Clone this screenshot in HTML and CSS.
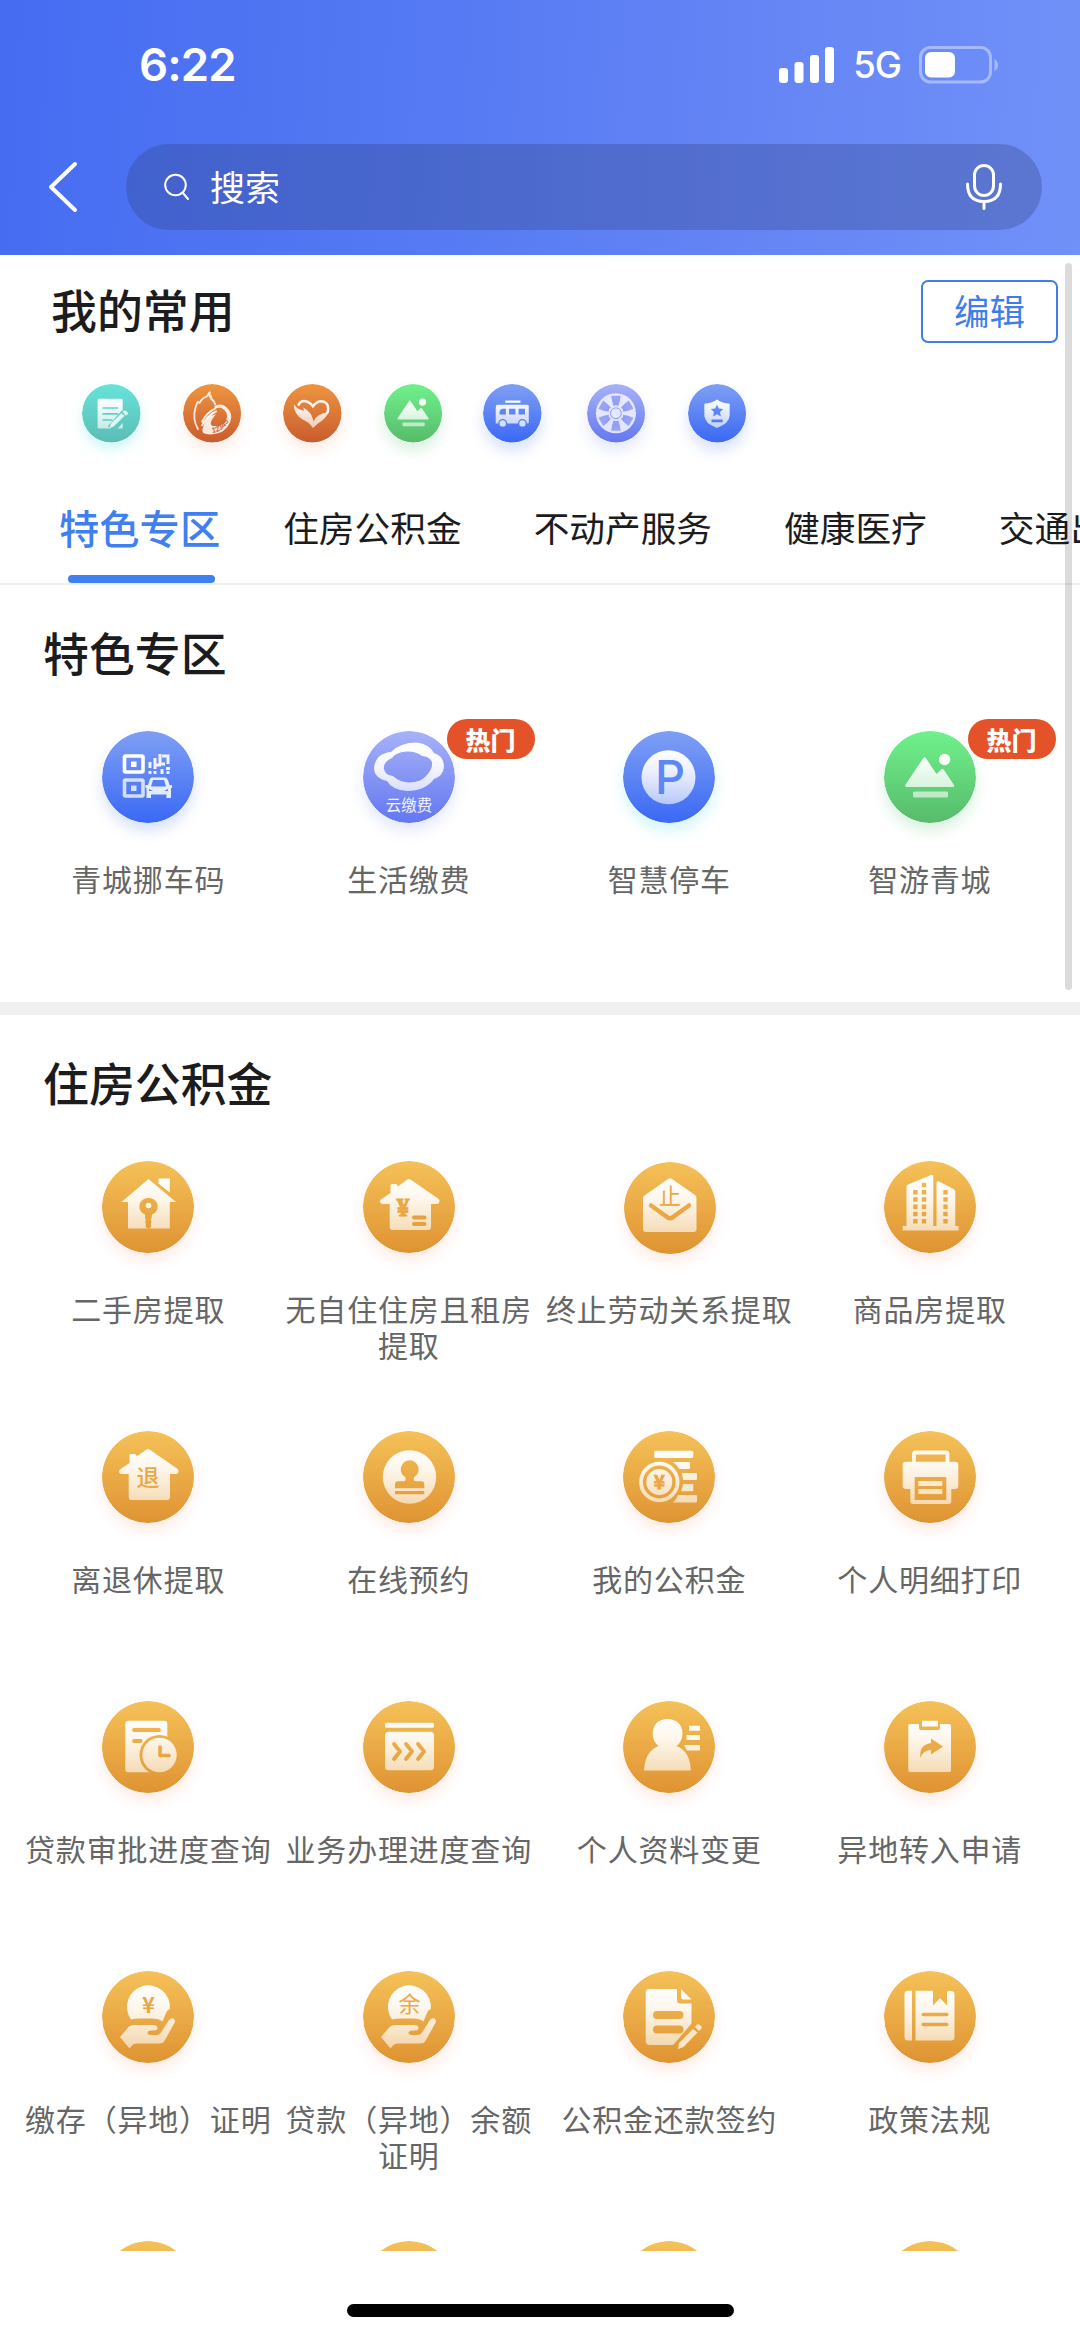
FILE: index.html
```html
<!DOCTYPE html>
<html lang="zh-CN">
<head>
<meta charset="utf-8">
<title>服务</title>
<link rel="stylesheet" href="styles.css">
</head>
<body>
<svg class="defs" width="0" height="0" aria-hidden="true">
  <defs>
    <linearGradient id="gold" gradientUnits="userSpaceOnUse" x1="0" y1="0" x2="0" y2="92"><stop offset="0" stop-color="#f5c158"/><stop offset="1" stop-color="#df9332"/></linearGradient>
    <linearGradient id="blue" gradientUnits="userSpaceOnUse" x1="0" y1="0" x2="0" y2="92"><stop offset="0" stop-color="#7f9ff5"/><stop offset="1" stop-color="#3a69f4"/></linearGradient>
    <linearGradient id="violet" gradientUnits="userSpaceOnUse" x1="0" y1="0" x2="0" y2="92"><stop offset="0" stop-color="#a7b2f8"/><stop offset="1" stop-color="#6377f1"/></linearGradient>
    <linearGradient id="green" gradientUnits="userSpaceOnUse" x1="0" y1="0" x2="0" y2="92"><stop offset="0" stop-color="#70f18c"/><stop offset="1" stop-color="#57bb6b"/></linearGradient>
    <linearGradient id="teal" gradientUnits="userSpaceOnUse" x1="0" y1="0" x2="0" y2="92"><stop offset="0" stop-color="#68e3da"/><stop offset="1" stop-color="#5bbdb4"/></linearGradient>
    <linearGradient id="rust" gradientUnits="userSpaceOnUse" x1="0" y1="0" x2="0" y2="92"><stop offset="0" stop-color="#ef9540"/><stop offset="1" stop-color="#c95c2e"/></linearGradient>
    <linearGradient id="white" gradientUnits="userSpaceOnUse" x1="0" y1="16" x2="0" y2="76"><stop offset="0" stop-color="#fff"/><stop offset=".35" stop-color="#fff" stop-opacity=".9"/><stop offset="1" stop-color="#fff" stop-opacity=".58"/></linearGradient>
    <symbol id="house" viewBox="0 0 92 92">
      <path fill="url(#white)" d="M27.5 32V24.5Q27.5 23 29 23H33Q34.5 23 34.6 25.5L44.5 18.6Q46 17.6 47.5 18.6L75 37.500Q77.500 39.500 76 42Q75.300 43 73.500 43H68V66Q68 69 65 69H29.500Q26.700 69 26.700 66V43H19.500Q17.500 43 17 41Q16.700 39 18.500 38Z"/>
    </symbol>
    <symbol id="mountain" viewBox="0 0 92 92">
      <path fill="url(#white)" d="M39 27.500Q40.600 24.500 42.200 27.500L52.500 43L57 38.500Q58.500 37 60 39L70 54Q70.800 55.800 69 56H22.500Q20.500 55.800 21.500 53.500Z"/>
      <circle cx="60.600" cy="28.500" r="5.700" fill="url(#white)"/>
      <rect x="29" y="60.500" width="35" height="6" rx="1.500" fill="#fff" opacity=".6"/>
    </symbol>
    <symbol id="hand" viewBox="0 0 92 92">
      <path fill="url(#white)" d="M29 48.500A21.500 21.500 0 1 1 67.800 38Q65 39 64 42L60.500 50.500Q57 47.500 50 47.500H38Q32 47.500 29 48.500Z"/>
      <path fill="url(#white)" d="M18 66L26.500 56Q28.500 54 32 54H51Q55.500 54 55.500 57Q55.500 59.500 51.500 59.500H49Q46 59.500 45.500 61.500Q45.300 64 49 64H54Q57.500 64 59 61.500L67 49Q69 46.500 71.500 47.500Q73.700 49 72.700 51.500L63 69Q61.500 72.500 57 72.500H34.500Q31.500 72.500 30 74.500L27.500 77.500Z"/>
    </symbol>
  </defs>
</svg>

<div class="screen">
  <header class="top">
    <div class="status">
      <span class="time">6:22</span>
      <div class="status-icons">
        <svg class="signal" viewBox="0 0 56 36"><rect x="0" y="21" width="9" height="15" rx="3"/><rect x="15.500" y="15" width="9" height="21" rx="3"/><rect x="31" y="8" width="9" height="28" rx="3"/><rect x="46" y="0" width="9" height="36" rx="3"/></svg>
        <span class="net">5G</span>
        <svg class="battery" viewBox="0 0 80 38"><rect x="1.500" y="1.500" width="70" height="34.500" rx="10" fill="none" stroke="#fff" stroke-opacity=".4" stroke-width="3"/><rect x="6" y="6" width="30" height="25.500" rx="6" fill="#fff"/><path d="M75.500 13Q79 15 79 19T75.500 25Z" fill="#fff" opacity=".4"/></svg>
      </div>
    </div>
    <div class="nav">
      <svg class="back" viewBox="0 0 32 52"><path d="M28 3L4 26L28 49" fill="none" stroke="#fff" stroke-width="4" stroke-linecap="round" stroke-linejoin="round"/></svg>
      <div class="search">
        <svg class="glass" viewBox="0 0 26 28"><circle cx="11.500" cy="12" r="10.300" fill="none" stroke="#fff" stroke-width="2"/><path d="M19 20L24 26" stroke="#fff" stroke-width="2" stroke-linecap="round"/></svg>
        <span class="search-text">搜索</span>
        <svg class="mic" viewBox="0 0 36 46"><g fill="none" stroke="#fff" stroke-width="3" stroke-linecap="round"><rect x="8.500" y="1.500" width="19" height="30" rx="9.500"/><path d="M1.500 20Q1.500 37.500 18 37.500T34.500 20M18 38V44.500"/></g></svg>
      </div>
    </div>
  </header>

  <main class="content">
    <section class="common">
      <div class="common-head"><h2>我的常用</h2><button class="edit">编辑</button></div>
      <div class="quick">
        <svg class="ico teal" viewBox="0 0 92 92"><circle cx="46" cy="46" r="46" fill="url(#teal)"/><path fill="url(#white)" d="M24.600 25Q24.600 23 26.500 23H62Q64 23 64 25V70H26.500Q24.600 70 24.600 68Z"/><path d="M33 37.700H56M33 47H56M33 56.600H47" stroke="url(#teal)" stroke-width="2.500" stroke-linecap="round"/><path d="M68 46L46 71" stroke="url(#teal)" stroke-width="14"/><path fill="#fff" opacity=".8" d="M62 46L67 50L50 67L43 69.500L45.500 62ZM64 44L66 42Q68 41 71 44T71 48L69 50Z"/></svg>
        <svg class="ico rust" viewBox="0 0 92 92"><circle cx="46" cy="46" r="46" fill="url(#rust)"/><path fill="none" stroke="#fff" stroke-opacity=".85" stroke-width="2.800" stroke-linejoin="round" d="M24 72Q14 55 20 36L23 28L26 30Q30 22 37 20L42 13V20Q46 17 44 23Q49 26 51 33"/><path fill="#fff" opacity=".85" d="M49 35Q59 29 68 36Q80 46 74 60Q67 77 47 79Q37 80 32 77Q29 74 32 67L34 59Q39 49 48 43L45 50L52 47L45 57Q42 65 47 66Q60 67 66 60Q73 49 65 41Q59 35 51 39Z"/><path d="M30 59Q38 44 50 39M30 65Q37 51 52 43" fill="none" stroke="#fff" stroke-opacity=".85" stroke-width="3" stroke-linecap="round"/><path id="arc" fill="none" d="M46 77Q64 76 75 53"/><text class="digits"><textPath href="#arc">12345</textPath></text></svg>
        <svg class="ico rust" viewBox="0 0 92 92"><circle cx="46" cy="46" r="46" fill="url(#rust)"/><path fill="none" stroke="#fff" stroke-opacity=".92" stroke-width="4" d="M24 34Q27 26 35 27Q42 28 47 35Q52 28 59 27Q71 27 71 39Q71 43 69 46"/><path fill="url(#white)" d="M17 32Q22 40 33 42L32 37Q46 45 48 59Q52 47 72 44Q67 55 55 62L47 69Q42 61 31 56Q17 48 17 32Z"/></svg>
        <svg class="ico green" viewBox="0 0 92 92"><circle cx="46" cy="46" r="46" fill="url(#green)"/><use href="#mountain"/></svg>
        <svg class="ico blue" viewBox="0 0 92 92"><circle cx="46" cy="46" r="46" fill="url(#blue)"/><rect x="35" y="26" width="24" height="3.500" fill="#fff"/><path fill="url(#white)" d="M22 32.500H70Q72 32.500 72 35V60Q72 62 70 62H20V40Q20 32.500 22 32.500Z"/><path fill="url(#blue)" d="M36 39V48H26V44Q27 39 31 39ZM41 39H51V48H41ZM56 39H66V48H56Z"/><g fill="#d6e0ff" stroke="url(#blue)" stroke-width="2"><circle cx="31" cy="62" r="6"/><circle cx="62" cy="62" r="6"/></g></svg>
        <svg class="ico violet" viewBox="0 0 92 92"><circle cx="46" cy="46" r="46" fill="url(#violet)"/><circle cx="45.500" cy="46" r="31.500" fill="#eef0ff" opacity=".9"/><g fill="url(#violet)"><path id="blade" d="M38 18.500H53Q52 28 49 35Q45.500 32 42 35Q39 28 38 18.500Z"/><use href="#blade" transform="rotate(60 45.500 46)"/><use href="#blade" transform="rotate(120 45.500 46)"/><use href="#blade" transform="rotate(180 45.500 46)"/><use href="#blade" transform="rotate(240 45.500 46)"/><use href="#blade" transform="rotate(300 45.500 46)"/></g><circle cx="45.500" cy="46" r="8.500" fill="#e3e7ff" stroke="url(#violet)" stroke-width="1.500"/></svg>
        <svg class="ico blue" viewBox="0 0 92 92"><circle cx="46" cy="46" r="46" fill="url(#blue)"/><path fill="url(#white)" d="M45.600 24.500Q54 31 65.500 31V50Q65 62 45.600 69Q26 62 25.700 50V31Q37 31 45.600 24.500Z"/><path fill="url(#blue)" d="M45.600 32.500L48.600 38.700L55.400 39.500L50.400 44.200L51.700 51L45.600 47.600L39.500 51L40.800 44.200L35.800 39.500L42.600 38.700ZM37 56H54.500V60H37Z"/></svg>
      </div>
    </section>

    <nav class="tabs">
      <span class="tab active">特色专区</span><span class="tab">住房公积金</span><span class="tab">不动产服务</span><span class="tab">健康医疗</span><span class="tab">交通出行</span>
    </nav>

    <section class="group featured">
      <h2>特色专区</h2>
      <div class="grid">
        <div class="item"><svg class="ico blue" viewBox="0 0 92 92"><circle cx="46" cy="46" r="46" fill="url(#blue)"/><g fill="none" stroke="#fff" stroke-width="3.600"><rect x="22.500" y="25" width="18.500" height="16" rx="1"/><rect x="22.500" y="49" width="18.500" height="16" rx="1" stroke-opacity=".75"/></g><path fill="#fff" d="M29 30.500H34.500V36H29Z"/><path fill="#fff" opacity=".75" d="M29 54.500H34.500V60H29Z"/><path fill="none" stroke="#fff" stroke-opacity=".9" stroke-width="3" d="M48 31V37M48 40V43M53 27V38M53 40V43M58 23V34M53 34H59M60 38V43M60 25H66V33M58 33H63M64 37.500H68M66 40V43"/><path fill="#fff" opacity=".85" d="M50 46.500H63Q65 46.500 66 49L67.500 54H70V57H69V67H64.500V63.500H49V67H44.500V57H43.500V54H46L47.500 49Q48 46.500 50 46.500Z"/><path fill="url(#blue)" d="M51 49H62L64 55.500H49ZM47 58L51 60H47ZM66 58L62 60H66Z"/></svg><span class="label">青城挪车码</span></div>
        <div class="item"><svg class="ico violet" viewBox="0 0 92 92"><circle cx="46" cy="46" r="46" fill="url(#violet)"/><path fill="url(#white)" fill-rule="evenodd" d="M28 21Q37 11.500 54 11.500Q66 13 71 22Q81 25 81 36Q80 45 71 48Q62 60 44 60Q29 59 24 50Q11 47 11 37Q12 25 23 22Q25 21 28 21ZM44 20.500Q33 21 29 27Q20 31 21 38Q22 44 30 45Q37 51.500 46 51.500Q58 51 63 45Q70 38 69 31Q66 25 59 25Q53 20 44 20.500Z"/><text x="46" y="80" class="cloud">云缴费</text></svg><span class="badge">热门</span><span class="label">生活缴费</span></div>
        <div class="item"><svg class="ico blue cyan" viewBox="0 0 92 92"><circle cx="46" cy="46" r="46" fill="url(#blue)"/><circle cx="45.500" cy="46.300" r="27" fill="url(#white)"/><text x="47" y="63" class="park">P</text></svg><span class="label">智慧停车</span></div>
        <div class="item"><svg class="ico green" viewBox="0 0 92 92"><circle cx="46" cy="46" r="46" fill="url(#green)"/><use href="#mountain"/></svg><span class="badge">热门</span><span class="label">智游青城</span></div>
      </div>
    </section>

    <section class="group">
      <h2>住房公积金</h2>
      <div class="grid">
        <div class="item"><svg class="ico" viewBox="0 0 92 92"><circle cx="46" cy="46" r="46" fill="url(#gold)"/><path fill="url(#white)" d="M46.500 18L74 41H67.800V67.500H26V41H19.500ZM56.500 17.500H67.800V31.500L56.500 22.500Z"/><path fill="url(#gold)" d="M46.500 37A8.500 8.500 0 0 0 43 53.500V57.500L44 59L43 61L44 63L43.500 66L46.500 68L49.300 66L48.800 63L49.500 61L48.800 59L49.500 57L50 53.500A8.500 8.500 0 0 0 46.500 37Z"/><circle cx="46.500" cy="44.500" r="2.800" fill="#fdf4e2"/></svg><span class="label">二手房提取</span></div>
        <div class="item"><svg class="ico" viewBox="0 0 92 92"><circle cx="46" cy="46" r="46" fill="url(#gold)"/><use href="#house"/><text x="40" y="54.500" class="yuan serif">¥</text><path d="M51 56.500H61.500M51 63H61.500" stroke="url(#goldflat)" class="gold-line"/></svg><span class="label">无自住住房且租房提取</span></div>
        <div class="item"><svg class="ico lower" viewBox="0 0 92 92"><circle cx="46" cy="46" r="46" fill="url(#gold)"/><path fill="url(#white)" d="M44 17Q46 15.500 48 17L71 33Q72.500 34 72.500 36V67Q72.500 70 69.500 70H22Q19 70 19 67V36Q19 34.500 20.500 33.500Z"/><path d="M27 43.500L43 55Q46 57.500 49 55L65 43.500" fill="none" stroke="url(#gold)" stroke-width="4.500" stroke-linecap="round"/><text x="46" y="41.500" class="glyph">止</text></svg><span class="label">终止劳动关系提取</span></div>
        <div class="item"><svg class="ico" viewBox="0 0 92 92"><circle cx="46" cy="46" r="46" fill="url(#gold)"/><path fill="url(#white)" d="M22.500 26Q22.500 24 24 23.500L46.500 14.300Q49.300 13.500 49.300 16V65H52.500V22Q52.500 19.500 55 20.500L69.500 28Q71.300 29 71.300 31V65H74.500V69.500H18.700V65H22.500Z"/><path stroke="url(#gold)" stroke-width="4.400" stroke-dasharray="4.400 2.850" d="M31.400 29V63M61.500 29V63.010"/><path stroke="url(#gold)" stroke-width="4.400" stroke-dasharray="4.400 2.850" d="M40 21.750V63"/></svg><span class="label">商品房提取</span></div>

        <div class="item"><svg class="ico" viewBox="0 0 92 92"><circle cx="46" cy="46" r="46" fill="url(#gold)"/><use href="#house"/><text x="46" y="54.500" class="glyph mid">退</text></svg><span class="label">离退休提取</span></div>
        <div class="item"><svg class="ico" viewBox="0 0 92 92"><circle cx="46" cy="46" r="46" fill="url(#gold)"/><circle cx="46.500" cy="46" r="26.700" fill="url(#white)"/><path fill="url(#gold)" d="M46.700 29.300A9 9 0 0 1 51 46.200Q50 50 53 50.300H59Q61.300 50.500 61.300 53V57.300H32V53Q32 50.500 34.500 50.300H40.500Q43.500 50 42.400 46.200A9 9 0 0 1 46.700 29.300ZM32 60H61.300V63.300H32Z"/></svg><span class="label">在线预约</span></div>
        <div class="item"><svg class="ico" viewBox="0 0 92 92"><circle cx="46" cy="46" r="46" fill="url(#gold)"/><g fill="url(#white)"><rect x="31.300" y="19.700" width="39" height="7.300" rx="1.500"/><path d="M50 31H66Q67 31 67 32V37Q67 38 66 38H56.500Q54 34 50 31ZM59 42H73Q74 42 74 43V48Q74 49 73 49H60Q60 45 58.500 42ZM60 53H69Q70.300 53 70.300 54V59Q70.300 60.300 69 60.300H58Q59.500 57 60 53ZM55 64H73Q74 64 74 65V70.500Q74 71.500 73 71.500H50Q53 69 55 64Z"/><circle cx="36.300" cy="51" r="13"/></g><circle cx="36.300" cy="51" r="18.300" fill="none" stroke="url(#white)" stroke-width="3.800"/><text x="36.300" y="58" class="yuan small">¥</text></svg><span class="label">我的公积金</span></div>
        <div class="item"><svg class="ico" viewBox="0 0 92 92"><circle cx="46" cy="46" r="46" fill="url(#gold)"/><path d="M30 31V23Q30 21.500 32 21.500H61.500Q63.500 21.500 63.500 23V31" fill="none" stroke="#fffaf0" stroke-width="3.800"/><path fill="url(#white)" fill-rule="evenodd" d="M22 30.700H71Q74.300 30.700 74.300 34V55Q74.300 58 71 58H67.300V70Q67.300 73 64.500 73H29Q26.300 73 26.300 70V58H22Q18.700 58 18.700 55V34Q18.700 30.700 22 30.700ZM30.700 46V69H62.300V46Z"/><path fill="url(#white)" d="M34.300 50H58.300V55H34.300ZM34.300 58H58.300V63H34.300Z"/></svg><span class="label">个人明细打印</span></div>

        <div class="item"><svg class="ico" viewBox="0 0 92 92"><circle cx="46" cy="46" r="46" fill="url(#gold)"/><rect x="23.300" y="19.700" width="42" height="51.500" rx="3" fill="url(#white)"/><path d="M32 29.010L57 29M32 40.010L38.500 40" stroke="url(#gold)" stroke-width="3.800" stroke-linecap="round"/><circle cx="57.500" cy="54" r="20" fill="url(#gold)"/><circle cx="57.500" cy="54" r="17.200" fill="url(#white)"/><path d="M58 46V54.500H67" fill="none" stroke="url(#gold)" stroke-width="3.600" stroke-linecap="round" stroke-linejoin="round"/></svg><span class="label">贷款审批进度查询</span></div>
        <div class="item"><svg class="ico" viewBox="0 0 92 92"><circle cx="46" cy="46" r="46" fill="url(#gold)"/><g fill="url(#white)"><rect x="22" y="21.700" width="49" height="5" rx="1.500"/><rect x="22" y="30.700" width="49" height="38.500" rx="3.500"/></g><path d="M31 43L37 50.500L31 58M43 43L49 50.500L43 58M55 43L61 50.500L55 58" fill="none" stroke="url(#gold)" stroke-width="3.800" stroke-linecap="round" stroke-linejoin="round"/></svg><span class="label">业务办理进度查询</span></div>
        <div class="item"><svg class="ico" viewBox="0 0 92 92"><circle cx="46" cy="46" r="46" fill="url(#gold)"/><path fill="url(#white)" d="M44.500 18Q59 18.500 59.500 33Q59 41 53.500 45Q67 50 67.800 69.500H21Q22 50 35.500 45Q30 41 29.700 33Q30 18.500 44.500 18ZM66 24.700H77V29.700H66ZM63.500 34H77V39H63.500ZM61 44H77V49.500H64Q62 46 61 44Z"/></svg><span class="label">个人资料变更</span></div>
        <div class="item"><svg class="ico" viewBox="0 0 92 92"><circle cx="46" cy="46" r="46" fill="url(#gold)"/><path fill="url(#white)" d="M26 23H35V27Q35 29 37 29H54Q56 29 56 27V23H65Q67 23 67 25V69Q67 71 65 71H26Q24.300 71 24.300 69V25Q24.300 23 26 23ZM38 19.700H54V25.500H38Z"/><path fill="url(#gold)" d="M47 37.500L59 45.500L47 53.500V49Q39 49 36.500 57Q34.500 44 47 42Z"/></svg><span class="label">异地转入申请</span></div>

        <div class="item"><svg class="ico" viewBox="0 0 92 92"><circle cx="46" cy="46" r="46" fill="url(#gold)"/><use href="#hand"/><text x="46.500" y="42" class="yuan">¥</text></svg><span class="label">缴存（异地）证明</span></div>
        <div class="item"><svg class="ico" viewBox="0 0 92 92"><circle cx="46" cy="46" r="46" fill="url(#gold)"/><use href="#hand"/><text x="46.500" y="40.500" class="glyph">余</text></svg><span class="label">贷款（异地）余额证明</span></div>
        <div class="item"><svg class="ico" viewBox="0 0 92 92"><circle cx="46" cy="46" r="46" fill="url(#gold)"/><path fill="url(#white)" d="M26 18H54V29Q54 32.500 57.500 32.500H68.500V55L57 74H27Q22.700 74 22.700 70V22Q22.700 18 26 18ZM58 18L68.500 28.500H60Q58 28.500 58 26Z"/><g fill="url(#gold)"><rect x="30" y="40" width="30.500" height="8" rx="4"/><rect x="30" y="54.500" width="30.500" height="8" rx="4"/></g><path d="M76 53L53 80" stroke="url(#gold)" stroke-width="12"/><path fill="#fbe6c6" d="M70 58L74.500 61.500L60.500 76L55 78L56 72ZM72 56L73.500 54Q75 52.500 77.500 54.500T78 58L76 60Z"/></svg><span class="label">公积金还款签约</span></div>
        <div class="item"><svg class="ico" viewBox="0 0 92 92"><circle cx="46" cy="46" r="46" fill="url(#gold)"/><path fill="url(#white)" d="M24 19.700H28V69.500H24Q20.500 69.500 20.500 66V23Q20.500 19.700 24 19.700ZM31.500 19.700H49V34.500L56 27L63 34.500V22Q63 19.700 65 19.700Q70.500 19.700 70.500 23V66Q70.500 69.500 67 69.500H31.500Z"/><g fill="url(#gold)"><rect x="37.500" y="41.700" width="27" height="3.500" rx="1.700"/><rect x="37.500" y="51.700" width="27" height="3.500" rx="1.700"/></g></svg><span class="label">政策法规</span></div>

        <div class="item"><svg class="ico" viewBox="0 0 92 92"><circle cx="46" cy="46" r="46" fill="url(#gold)"/></svg></div>
        <div class="item"><svg class="ico" viewBox="0 0 92 92"><circle cx="46" cy="46" r="46" fill="url(#gold)"/></svg></div>
        <div class="item"><svg class="ico" viewBox="0 0 92 92"><circle cx="46" cy="46" r="46" fill="url(#gold)"/></svg></div>
        <div class="item"><svg class="ico" viewBox="0 0 92 92"><circle cx="46" cy="46" r="46" fill="url(#gold)"/></svg></div>
      </div>
    </section>
    <div class="scrollbar"></div>
  </main>
  <footer class="home"><div class="home-bar"></div></footer>
</div>
</body>
</html>
```
FILE: styles.css
```css
* { box-sizing: border-box; }
body {
  margin: 0;
  background: #fff;
  font-family: "Noto Sans CJK SC", "Noto Sans", sans-serif;
  color: #1c1c1e;
}
.defs { position: absolute; }
.screen {
  width: 1080px;
  height: 2337px;
  display: flex;
  flex-direction: column;
  overflow: hidden;
}

/* Header */
.top {
  height: 255px;
  flex: none;
  background: linear-gradient(93deg, #466cf2 0%, #5479f3 38%, #6484f5 68%, #7091f8 100%);
  color: #fff;
}
.status {
  height: 130px;
  padding: 0 81px 0 139px;
  display: flex;
  align-items: center;
  justify-content: space-between;
}
.time { font: 600 45.500px/1 Inter, sans-serif; letter-spacing: -.9px; }
.status-icons { display: flex; align-items: center; }
.signal { width: 56px; height: 36px; fill: #fff; }
.net { font: 500 36.500px/1 Inter, sans-serif; letter-spacing: -1px; margin: 1px 18px 0 18px; }
.battery { width: 80px; height: 38px; }
.nav {
  height: 114px;
  display: flex;
  align-items: center;
  padding: 0 38px 0 47px;
}
.back { width: 32px; height: 52px; margin-right: 47px; }
.search {
  flex: 1;
  height: 86px;
  border-radius: 43px;
  background: rgba(48, 64, 120, .3);
  display: flex;
  align-items: center;
  padding: 0 40px 0 38px;
}
.glass { width: 26px; height: 28px; }
.search-text { font-size: 35px; line-height: 50px; margin: -2px 0 0 20px; flex: 1; }
.mic { width: 36px; height: 46px; }

/* Scrolling content */
.content {
  position: relative;
  height: 1996px;
  flex: none;
  overflow: hidden;
}
h2 { margin: 0; font-size: 45.9px; line-height: 60px; font-weight: 500; }
.common { height: 233px; }
.common-head {
  display: flex;
  align-items: center;
  justify-content: space-between;
  padding: 25px 22px 0 51px;
}
.common-head h2 { margin-top: -8px; }
.edit {
  width: 137px;
  height: 63px;
  padding: 0 0 3px;
  border: 2.5px solid #3f7ee8;
  border-radius: 7px;
  background: #fff;
  color: #3f7ee8;
  font: 400 35.500px/1 "Noto Sans CJK SC", sans-serif;
}
.quick {
  display: grid;
  grid-template-columns: 100.700px 100.600px 100.700px 99.300px 103.600px 101px 60px;
  padding: 41px 0 0 82px;
}
.quick .ico { width: 58.500px; height: 58.500px; }
.ico {
  display: block;
  width: 92px;
  height: 92px;
  border-radius: 50%;
  box-shadow: 0 8px 14px rgba(236, 96, 50, .12);
}
.ico.blue { box-shadow: 0 8px 14px rgba(61, 109, 243, .2); }
.ico.cyan { box-shadow: 0 8px 14px rgba(80, 220, 250, .25); }
.ico.violet { box-shadow: 0 8px 14px rgba(107, 125, 242, .18); }
.ico.green { box-shadow: 0 8px 14px rgba(87, 189, 108, .22); }
.ico.teal { box-shadow: 0 6px 12px rgba(80, 225, 225, .28); }
.ico.lower { margin: 1px 0 -1px 2px; }

/* Tabs */
.tabs {
  height: 97px;
  display: flex;
  padding-left: 59px;
  border-bottom: 2px solid #efefef;
  overflow: hidden;
  white-space: nowrap;
}
.tab {
  font-size: 35.700px;
  line-height: 78px;
  margin-right: 72px;
  flex: none;
}
.tab.active {
  position: relative;
  font-size: 40.300px;
  font-weight: 500;
  color: #3f7ff0;
  margin-right: 63px;
}
.tab.active::after {
  content: "";
  position: absolute;
  left: 9px;
  bottom: 0;
  width: 147px;
  height: 8px;
  border-radius: 4px;
  background: #3f7ff0;
}

/* Service groups */
.group h2 { padding: 36px 0 0 43px; }
.group .grid {
  display: grid;
  grid-template-columns: repeat(4, 260.500px);
  grid-auto-rows: 270px;
  padding: 50px 0 0 18px;
}
.group.featured { height: 430px; border-bottom: 13px solid #f0f0f0; }
.item {
  position: relative;
  display: flex;
  flex-direction: column;
  align-items: center;
}
.label {
  width: 252px;
  margin-top: 37px;
  text-align: center;
  font-size: 30px;
  letter-spacing: .8px;
  line-height: 36px;
  color: #666;
}
.badge {
  position: absolute;
  left: 168px;
  top: -12px;
  width: 88px;
  height: 40px;
  border-radius: 20px;
  background: #e35228;
  color: #fff;
  text-align: center;
  font-size: 25px;
  line-height: 40px;
  font-weight: 900;
}
.cloud { font-size: 15.500px; fill: #f2f3ff; text-anchor: middle; }
.park { font: 500 47px Inter, sans-serif; fill: #5e86f4; text-anchor: middle; }
.glyph { font-size: 22px; fill: #eaa743; text-anchor: middle; }
.glyph.mid { font-size: 23px; font-weight: 500; }
.yuan { font: 700 22px "Noto Sans CJK SC", sans-serif; fill: #eaa743; text-anchor: middle; }
.yuan.serif { font: 700 25px "Liberation Serif", serif; stroke: #eaa743; stroke-width: 1.2px; }
.yuan.small { font-size: 19px; stroke: #eaa743; stroke-width: .8px; }
.gold-line { stroke: #e7a03d; stroke-width: 4px; stroke-linecap: round; }
.digits { font: 700 12px "Liberation Sans", sans-serif; fill: #cf6832; }

.scrollbar {
  position: absolute;
  top: 8px;
  left: 1065px;
  width: 7px;
  height: 727px;
  border-radius: 4px;
  background: rgba(0, 0, 0, .14);
}
.home { flex: 1; display: flex; justify-content: center; padding-top: 53px; }
.home-bar { width: 387px; height: 13px; border-radius: 7px; background: #000; }
```
